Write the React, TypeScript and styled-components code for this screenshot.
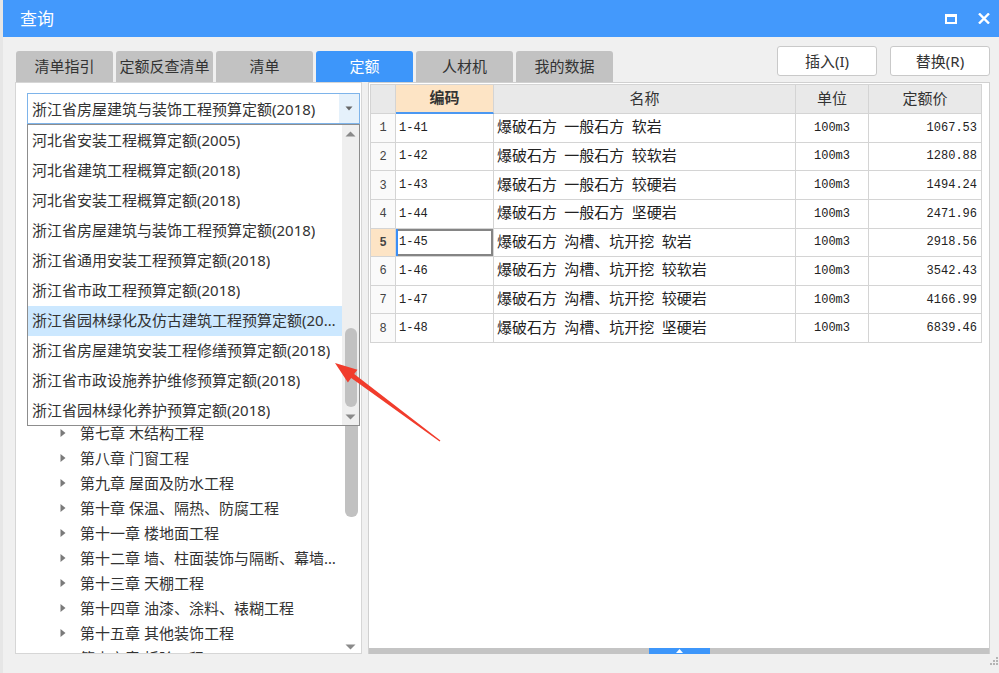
import React from "react";
import styled, { createGlobalStyle } from "styled-components";

const GlobalStyle = createGlobalStyle`
  html, body { margin: 0; padding: 0; background: #f0f0f0; overflow: hidden; }
  body { font-family: "Noto Sans", "Noto Sans CJK SC", sans-serif; color: #333; }
  * { box-sizing: border-box; }
`;

const BLUE = "#4399fc";

const Window = styled.div`
  position: relative;
  width: 999px;
  height: 673px;
  display: flex;
  flex-direction: column;
  border-left: 3px solid #e6e6e6;
  background: #f0f0f0;
`;

const TitleBar = styled.div`
  height: 37px;
  flex: none;
  background: ${BLUE};
  display: flex;
  align-items: center;
  justify-content: space-between;
  padding: 0 9px 0 17px;
`;

const Title = styled.div`
  color: #fff;
  font-size: 17px;
  line-height: 1;
`;

const WinButtons = styled.div`
  display: flex;
  align-items: center;
  gap: 21px;
`;

const TopRow = styled.div`
  height: 45px;
  flex: none;
  display: flex;
  justify-content: space-between;
  padding: 0 9px 0 13px;
`;

const Tabs = styled.div`
  align-self: flex-end;
  display: flex;
  gap: 3px;
`;

const Tab = styled.div<{ $active?: boolean }>`
  width: 97px;
  height: 31px;
  padding-bottom: 2px;
  border-radius: 3px 3px 0 0;
  background: ${(p) => (p.$active ? "#3d96fa" : "#c2c2c2")};
  color: ${(p) => (p.$active ? "#fff" : "#333")};
  font-size: 15px;
  display: flex;
  align-items: center;
  justify-content: center;
  white-space: nowrap;
`;

const Actions = styled.div`
  margin-top: 9px;
  display: flex;
  gap: 13px;
  align-self: flex-start;
`;

const ActionButton = styled.div`
  width: 100px;
  height: 30px;
  padding-bottom: 2px;
  background: #fff;
  border: 1px solid #c9c9c9;
  border-radius: 3px;
  font-size: 15px;
  color: #333;
  display: flex;
  align-items: center;
  justify-content: center;
`;

const Main = styled.div`
  height: 572px;
  flex: none;
  display: flex;
  gap: 6px;
  padding-left: 12px;
`;

const LeftPanel = styled.div`
  position: relative;
  width: 347px;
  height: 572px;
  background: #fff;
  border: 1px solid #d6d6d6;
  display: flex;
  flex-direction: column;
`;

const Combo = styled.div`
  margin: 10px 0 0 11px;
  width: 333px;
  height: 31px;
  flex: none;
  border: 1px solid #7eb4ea;
  display: flex;
  align-items: center;
  background: #fff;
`;

const ComboText = styled.div`
  flex: 1;
  padding: 0 0 1px 4px;
  font-size: 15px;
  color: #333;
  white-space: nowrap;
  overflow: hidden;
`;

const ComboArrow = styled.div`
  width: 20px;
  height: 100%;
  background: #e5f1fb;
  display: flex;
  align-items: center;
  justify-content: center;
`;

const TreeArea = styled.div`
  flex: 1;
  min-height: 0;
  display: flex;
  overflow: hidden;
`;

const TreeList = styled.div`
  flex: 1;
  min-width: 0;
  padding-top: 20.5px;
  overflow: hidden;
`;

const TreeRow = styled.div<{ $level: number }>`
  height: 25px;
  display: flex;
  align-items: center;
  padding-left: ${(p) => 12 + p.$level * 16}px;
  padding-right: 4px;
  font-size: 15px;
  color: #333;
  white-space: nowrap;
`;

const Caret = styled.span`
  width: 20px;
  flex: none;
  display: flex;
  align-items: center;
  padding-top: 2px;
`;

const RowLabel = styled.span`
  overflow: hidden;
  text-overflow: ellipsis;
  min-width: 0;
`;

const ScrollCol = styled.div<{ $bg: string }>`
  width: 17px;
  flex: none;
  background: ${(p) => p.$bg};
  display: flex;
  flex-direction: column;
  align-items: flex-start;
  padding-left: ${(p) => (p.$bg === "#fff" ? 1 : 3)}px;
`;

const Thumb = styled.div<{ $top: number; $height: number; $width: number }>`
  margin-top: ${(p) => p.$top}px;
  height: ${(p) => p.$height}px;
  width: ${(p) => p.$width}px;
  border-radius: 6px;
  background: #c1c1c1;
  flex: none;
`;

const Fill = styled.div`
  flex: 1;
`;

const ArrowGlyph = styled.svg<{ $mt?: number; $mb?: number }>`
  flex: none;
  display: block;
  margin-top: ${(p) => p.$mt ?? 0}px;
  margin-bottom: ${(p) => p.$mb ?? 0}px;
`;

const Dropdown = styled.div`
  position: absolute;
  left: 11px;
  top: 41px;
  width: 333px;
  height: 302px;
  background: #fff;
  border: 1px solid #8d8d8d;
  display: flex;
  z-index: 2;
`;

const DropList = styled.div`
  width: 314px;
  padding-top: 1px;
`;

const DropItem = styled.div<{ $hl?: boolean }>`
  height: 30px;
  padding: 0 5px 4px 4px;
  display: flex;
  align-items: center;
  background: ${(p) => (p.$hl ? "#cce8ff" : "transparent")};
  font-size: 15px;
  color: #333;
  white-space: nowrap;
  overflow: hidden;
`;

const DropText = styled.span`
  overflow: hidden;
  text-overflow: ellipsis;
  min-width: 0;
`;

const RightPanel = styled.div`
  width: 622px;
  height: 572px;
  background: #fff;
  border: 1px solid #d0d0d0;
  border-bottom: none;
  display: flex;
  flex-direction: column;
  padding: 1px 0 0 1px;
`;

const Grid = styled.div`
  width: 612px;
  display: grid;
  grid-template-columns: 25px 98px 302px 73px 113px;
  grid-template-rows: 29px repeat(8, 28.625px);
  border-left: 1px solid #d4d4d4;
  border-top: 1px solid #d4d4d4;
`;

const Cell = styled.div<{
  $align?: "left" | "center" | "right";
  $bg?: string;
}>`
  border-right: 1px solid #d4d4d4;
  border-bottom: 1px solid #d4d4d4;
  background: ${(p) => p.$bg ?? "#fff"};
  display: flex;
  align-items: center;
  justify-content: ${(p) =>
    p.$align === "right" ? "flex-end" : p.$align === "center" ? "center" : "flex-start"};
  padding-left: ${(p) => (p.$align === "left" || !p.$align ? 3 : 0)}px;
  padding-right: ${(p) => (p.$align === "right" ? 4 : 0)}px;
  white-space: nowrap;
  overflow: hidden;
`;

const HeadCell = styled(Cell)<{ $key?: boolean }>`
  background: ${(p) => (p.$key ? "#fde4c5" : "#e9e9e9")};
  font-size: 15px;
  font-weight: ${(p) => (p.$key ? 700 : 400)};
  color: #333;
  padding-bottom: 4px;
  ${(p) => (p.$key ? "border-bottom: 2px solid #4b98f2;" : "")}
`;

const NumCell = styled(Cell)<{ $current?: boolean }>`
  background: ${(p) => (p.$current ? "#fde4c5" : "#fafafa")};
  font-family: "Liberation Mono", monospace;
  font-size: 12px;
  font-weight: ${(p) => (p.$current ? 700 : 400)};
  color: #444;
  padding-top: 1px;
`;

const MonoCell = styled(Cell)<{ $selected?: boolean }>`
  font-family: "Liberation Mono", monospace;
  font-size: 12px;
  color: #222;
  ${(p) =>
    p.$selected
      ? "box-shadow: inset 2px 0 0 #3b8ef5, inset 0 0 0 2px #858585;"
      : ""}
`;

const NameCell = styled(Cell)`
  font-family: "Noto Sans CJK SC", sans-serif;
  font-size: 15px;
  color: #222;
  word-spacing: 4px;
  padding-bottom: 4px;
`;

const Spacer = styled.div`
  flex: 1;
`;

const Splitter = styled.div`
  height: 6px;
  flex: none;
  margin-left: -1px;
  background: #c4c4c4;
  display: flex;
  justify-content: center;
`;

const SplitHandle = styled.div`
  width: 61px;
  height: 6px;
  background: #3d96fa;
  display: flex;
  align-items: center;
  justify-content: center;
`;

const BottomRow = styled.div`
  flex: 1;
  display: flex;
  justify-content: flex-end;
  align-items: flex-start;
  padding: 3px 1px 0 0;
`;

const Overlay = styled.svg`
  position: absolute;
  left: -3px;
  top: 0;
  pointer-events: none;
  z-index: 5;
`;

const dropItems = [
  "河北省安装工程概算定额(2005)",
  "河北省建筑工程概算定额(2018)",
  "河北省安装工程概算定额(2018)",
  "浙江省房屋建筑与装饰工程预算定额(2018)",
  "浙江省通用安装工程预算定额(2018)",
  "浙江省市政工程预算定额(2018)",
  "浙江省园林绿化及仿古建筑工程预算定额(2018)",
  "浙江省房屋建筑安装工程修缮预算定额(2018)",
  "浙江省市政设施养护维修预算定额(2018)",
  "浙江省园林绿化养护预算定额(2018)",
];

const tree: { level: number; label: string; open?: boolean }[] = [
  { level: 0, label: "浙江省房屋建筑与装饰工程预算定额(2018)", open: true },
  { level: 1, label: "建筑工程", open: true },
  { level: 2, label: "第一章 土石方工程", open: true },
  { level: 3, label: "一、土方工程" },
  { level: 3, label: "二、石方工程" },
  { level: 3, label: "三、回填及其他" },
  { level: 2, label: "第二章 地基处理与边坡支护工程" },
  { level: 2, label: "第三章 桩基工程" },
  { level: 2, label: "第四章 砌筑工程" },
  { level: 2, label: "第五章 混凝土及钢筋混凝土工程" },
  { level: 2, label: "第六章 金属结构工程" },
  { level: 2, label: "第七章 木结构工程" },
  { level: 2, label: "第八章 门窗工程" },
  { level: 2, label: "第九章 屋面及防水工程" },
  { level: 2, label: "第十章 保温、隔热、防腐工程" },
  { level: 2, label: "第十一章 楼地面工程" },
  { level: 2, label: "第十二章 墙、柱面装饰与隔断、幕墙工程" },
  { level: 2, label: "第十三章 天棚工程" },
  { level: 2, label: "第十四章 油漆、涂料、裱糊工程" },
  { level: 2, label: "第十五章 其他装饰工程" },
  { level: 2, label: "第十六章 拆除工程" },
];

const rows = [
  ["1-41", "爆破石方 一般石方 软岩", "100m3", "1067.53"],
  ["1-42", "爆破石方 一般石方 较软岩", "100m3", "1280.88"],
  ["1-43", "爆破石方 一般石方 较硬岩", "100m3", "1494.24"],
  ["1-44", "爆破石方 一般石方 坚硬岩", "100m3", "2471.96"],
  ["1-45", "爆破石方 沟槽、坑开挖 软岩", "100m3", "2918.56"],
  ["1-46", "爆破石方 沟槽、坑开挖 较软岩", "100m3", "3542.43"],
  ["1-47", "爆破石方 沟槽、坑开挖 较硬岩", "100m3", "4166.99"],
  ["1-48", "爆破石方 沟槽、坑开挖 坚硬岩", "100m3", "6839.46"],
];

const CaretIcon = ({ open }: { open?: boolean }) =>
  open ? (
    <svg width="9" height="9" viewBox="0 0 9 9">
      <path d="M0.5 2.5 L8.5 2.5 L4.5 7 Z" fill="#6f6f6f" />
    </svg>
  ) : (
    <svg width="6" height="10" viewBox="0 0 6 10">
      <path d="M0.5 1 L5.5 5 L0.5 9 Z" fill="#7a7a7a" />
    </svg>
  );

const Up = ({ mt }: { mt: number }) => (
  <ArrowGlyph $mt={mt} width="11" height="6" viewBox="0 0 11 6">
    <path d="M0.5 5.5 L5.5 0.5 L10.5 5.5 Z" fill="#8a8a8a" />
  </ArrowGlyph>
);

const Down = ({ mt, mb }: { mt?: number; mb?: number }) => (
  <ArrowGlyph $mt={mt} $mb={mb} width="11" height="6" viewBox="0 0 11 6">
    <path d="M0.5 0.5 L10.5 0.5 L5.5 5.5 Z" fill="#8a8a8a" />
  </ArrowGlyph>
);

export default function App() {
  return (
    <>
      <GlobalStyle />
      <Window>
        <TitleBar>
          <Title>查询</Title>
          <WinButtons>
            <svg width="12" height="10" viewBox="0 0 12 10">
              <rect x="1" y="1.5" width="10" height="7.5" fill="none" stroke="#fff" strokeWidth="2" />
              <rect x="0" y="0" width="12" height="3" fill="#fff" />
            </svg>
            <svg width="12" height="11" viewBox="0 0 12 11">
              <path d="M1 0.5 L11 10.5 M11 0.5 L1 10.5" stroke="#fff" strokeWidth="2.4" />
            </svg>
          </WinButtons>
        </TitleBar>

        <TopRow>
          <Tabs>
            <Tab>清单指引</Tab>
            <Tab>定额反查清单</Tab>
            <Tab>清单</Tab>
            <Tab $active>定额</Tab>
            <Tab>人材机</Tab>
            <Tab>我的数据</Tab>
          </Tabs>
          <Actions>
            <ActionButton>插入(I)</ActionButton>
            <ActionButton>替换(R)</ActionButton>
          </Actions>
        </TopRow>

        <Main>
          <LeftPanel>
            <Combo>
              <ComboText>浙江省房屋建筑与装饰工程预算定额(2018)</ComboText>
              <ComboArrow>
                <svg width="8" height="5" viewBox="0 0 8 5">
                  <path d="M0.5 0.5 L7.5 0.5 L4 4.5 Z" fill="#666" />
                </svg>
              </ComboArrow>
            </Combo>
            <TreeArea>
              <TreeList>
                {tree.map((t, i) => (
                  <TreeRow key={i} $level={t.level}>
                    <Caret>
                      {t.level < 3 ? <CaretIcon open={t.open} /> : null}
                    </Caret>
                    <RowLabel>{t.label}</RowLabel>
                  </TreeRow>
                ))}
              </TreeList>
              <ScrollCol $bg="#fff">
                <Thumb $top={60} $height={333} $width={13} />
                <Fill />
                <Down mb={3} />
              </ScrollCol>
            </TreeArea>

            <Dropdown>
              <DropList>
                {dropItems.map((d, i) => (
                  <DropItem key={i} $hl={i === 6}>
                    <DropText>{d}</DropText>
                  </DropItem>
                ))}
              </DropList>
              <ScrollCol $bg="#efefef">
                <Up mt={6} />
                <Thumb $top={191} $height={79} $width={12} />
                <Down mt={7} />
              </ScrollCol>
            </Dropdown>
          </LeftPanel>

          <RightPanel>
            <Grid>
              <HeadCell $align="center"></HeadCell>
              <HeadCell $align="center" $key>编码</HeadCell>
              <HeadCell $align="center">名称</HeadCell>
              <HeadCell $align="center">单位</HeadCell>
              <HeadCell $align="center">定额价</HeadCell>
              {rows.map((r, i) => (
                <React.Fragment key={r[0]}>
                  <NumCell $align="center" $current={i === 4}>
                    {i + 1}
                  </NumCell>
                  <MonoCell $selected={i === 4}>{r[0]}</MonoCell>
                  <NameCell>{r[1]}</NameCell>
                  <MonoCell $align="center">{r[2]}</MonoCell>
                  <MonoCell $align="right">{r[3]}</MonoCell>
                </React.Fragment>
              ))}
            </Grid>
            <Spacer />
            <Splitter>
              <SplitHandle>
                <svg width="7" height="4" viewBox="0 0 7 4">
                  <path d="M0 4 L3.5 0 L7 4 Z" fill="#fff" />
                </svg>
              </SplitHandle>
            </Splitter>
          </RightPanel>
        </Main>

        <BottomRow>
          <svg width="8" height="8" viewBox="0 0 8 8">
            <rect x="6" y="0" width="2" height="2" fill="#b5b5b5" />
            <rect x="3" y="3" width="2" height="2" fill="#b5b5b5" />
            <rect x="6" y="3" width="2" height="2" fill="#b5b5b5" />
            <rect x="0" y="6" width="2" height="2" fill="#b5b5b5" />
            <rect x="3" y="6" width="2" height="2" fill="#b5b5b5" />
            <rect x="6" y="6" width="2" height="2" fill="#b5b5b5" />
          </svg>
        </BottomRow>

        <Overlay width="999" height="673" viewBox="0 0 999 673">
          <polygon
            points="335,363 357.5,369.7 354.2,374.1 440.4,440.5 439.6,441.5 351.2,378.1 347.9,382.5"
            fill="#f13c2c"
          />
        </Overlay>
      </Window>
    </>
  );
}
